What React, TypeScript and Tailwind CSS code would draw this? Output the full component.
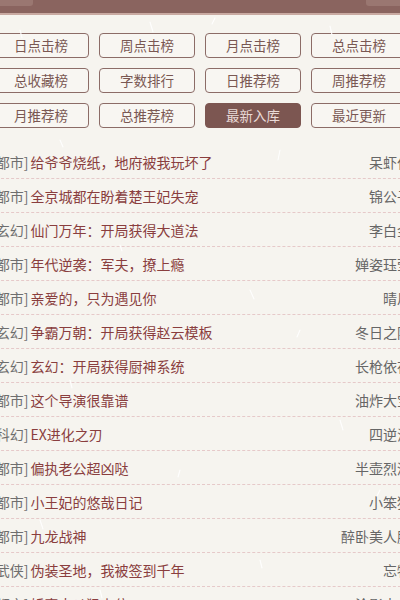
import React from "react";

const tabs = [
  "日点击榜",
  "周点击榜",
  "月点击榜",
  "总点击榜",
  "总收藏榜",
  "字数排行",
  "日推荐榜",
  "周推荐榜",
  "月推荐榜",
  "总推荐榜",
  "最新入库",
  "最近更新",
];

const books = [
  { cat: "都市", title: "给爷爷烧纸，地府被我玩坏了", author: "呆虾仁" },
  { cat: "都市", title: "全京城都在盼着楚王妃失宠", author: "锦公子" },
  { cat: "玄幻", title: "仙门万年：开局获得大道法", author: "李白金" },
  { cat: "都市", title: "年代逆袭：军夫，撩上瘾", author: "婵姿珏莹" },
  { cat: "都市", title: "亲爱的，只为遇见你", author: "晴川" },
  { cat: "玄幻", title: "争霸万朝：开局获得赵云模板", author: "冬日之阳" },
  { cat: "玄幻", title: "玄幻：开局获得厨神系统", author: "长枪依在" },
  { cat: "都市", title: "这个导演很靠谱", author: "油炸大宝" },
  { cat: "科幻", title: "EX进化之刃", author: "四逆汤" },
  { cat: "都市", title: "偏执老公超凶哒", author: "半壶烈酒" },
  { cat: "都市", title: "小王妃的悠哉日记", author: "小笨猪" },
  { cat: "都市", title: "九龙战神", author: "醉卧美人膝" },
  { cat: "武侠", title: "伪装圣地，我被签到千年", author: "忘物" },
  { cat: "都市", title: "娇妻太凶猛上位", author: "沧影大人" },
];

const specks = [
  [20, 30, 8, 2], [150, 22, 10, 3], [215, 18, 6, -3], [330, 26, 9, 2],
  [60, 140, 7, 3], [280, 150, 10, -2], [120, 245, 6, 2], [250, 290, 9, 4],
  [300, 330, 7, -3], [70, 380, 8, 2], [340, 420, 10, 3], [180, 470, 7, -2],
  [40, 520, 9, 3], [260, 560, 8, 2], [380, 490, 6, -3], [100, 590, 8, 2],
];

export default function App() {
  return (
    <div className="relative w-[400px] h-[600px] overflow-hidden bg-[#f6f4ef] font-['Noto_Sans_CJK_SC','Noto_Sans',sans-serif]">
      <div className="h-[15px] bg-[#8a645f] border-b-2 border-[#c9aaa2] flex justify-between items-start">
        <div className="w-[33px] h-[6px] bg-[#9a7771] rounded-br-[3px]" />
        <div className="w-[34px] h-[6px] bg-[#9a7771] rounded-bl-[3px]" />
      </div>

      <div className="ml-[-7px] w-[414px] mt-[18px] grid grid-cols-4 gap-x-[10px] gap-y-[10px]">
        {tabs.map((t) => {
          const active = t === "最新入库";
          return (
            <div
              key={t}
              className={
                active
                  ? "h-[25px] rounded-[4px] border-[1.5px] border-[#7c5651] bg-[#7c5651] text-[#eadbd8] text-[13.5px] flex items-center justify-center"
                  : "h-[25px] rounded-[4px] border-[1.5px] border-[#8c6c67] bg-[#f8f6f2] text-[#7a5853] text-[13.5px] flex items-center justify-center"
              }
            >
              {t}
            </div>
          );
        })}
      </div>

      <div className="ml-[-9px] w-[420px] mt-[17px]">
        {books.map((b, i) => (
          <div
            key={i}
            className="h-[34px] border-b border-dashed border-[#e6c9c9] flex items-center justify-between text-[14px] leading-none"
          >
            <div className="flex items-center whitespace-nowrap">
              <span className="text-[#6e6e6e]">[{b.cat}]</span>
              <span className="ml-[2px] text-[#8a3e3e]">{b.title}</span>
            </div>
            <span className="text-[#666666] whitespace-nowrap">{b.author}</span>
          </div>
        ))}
      </div>

      <svg className="pointer-events-none absolute inset-0" width="400" height="600">
        {specks.map(([x, y, l, d], i) => (
          <line
            key={i}
            x1={x}
            y1={y}
            x2={x + d}
            y2={y + l}
            stroke="#ffffff"
            strokeWidth="1.2"
            strokeLinecap="round"
            opacity="0.9"
          />
        ))}
      </svg>
    </div>
  );
}
